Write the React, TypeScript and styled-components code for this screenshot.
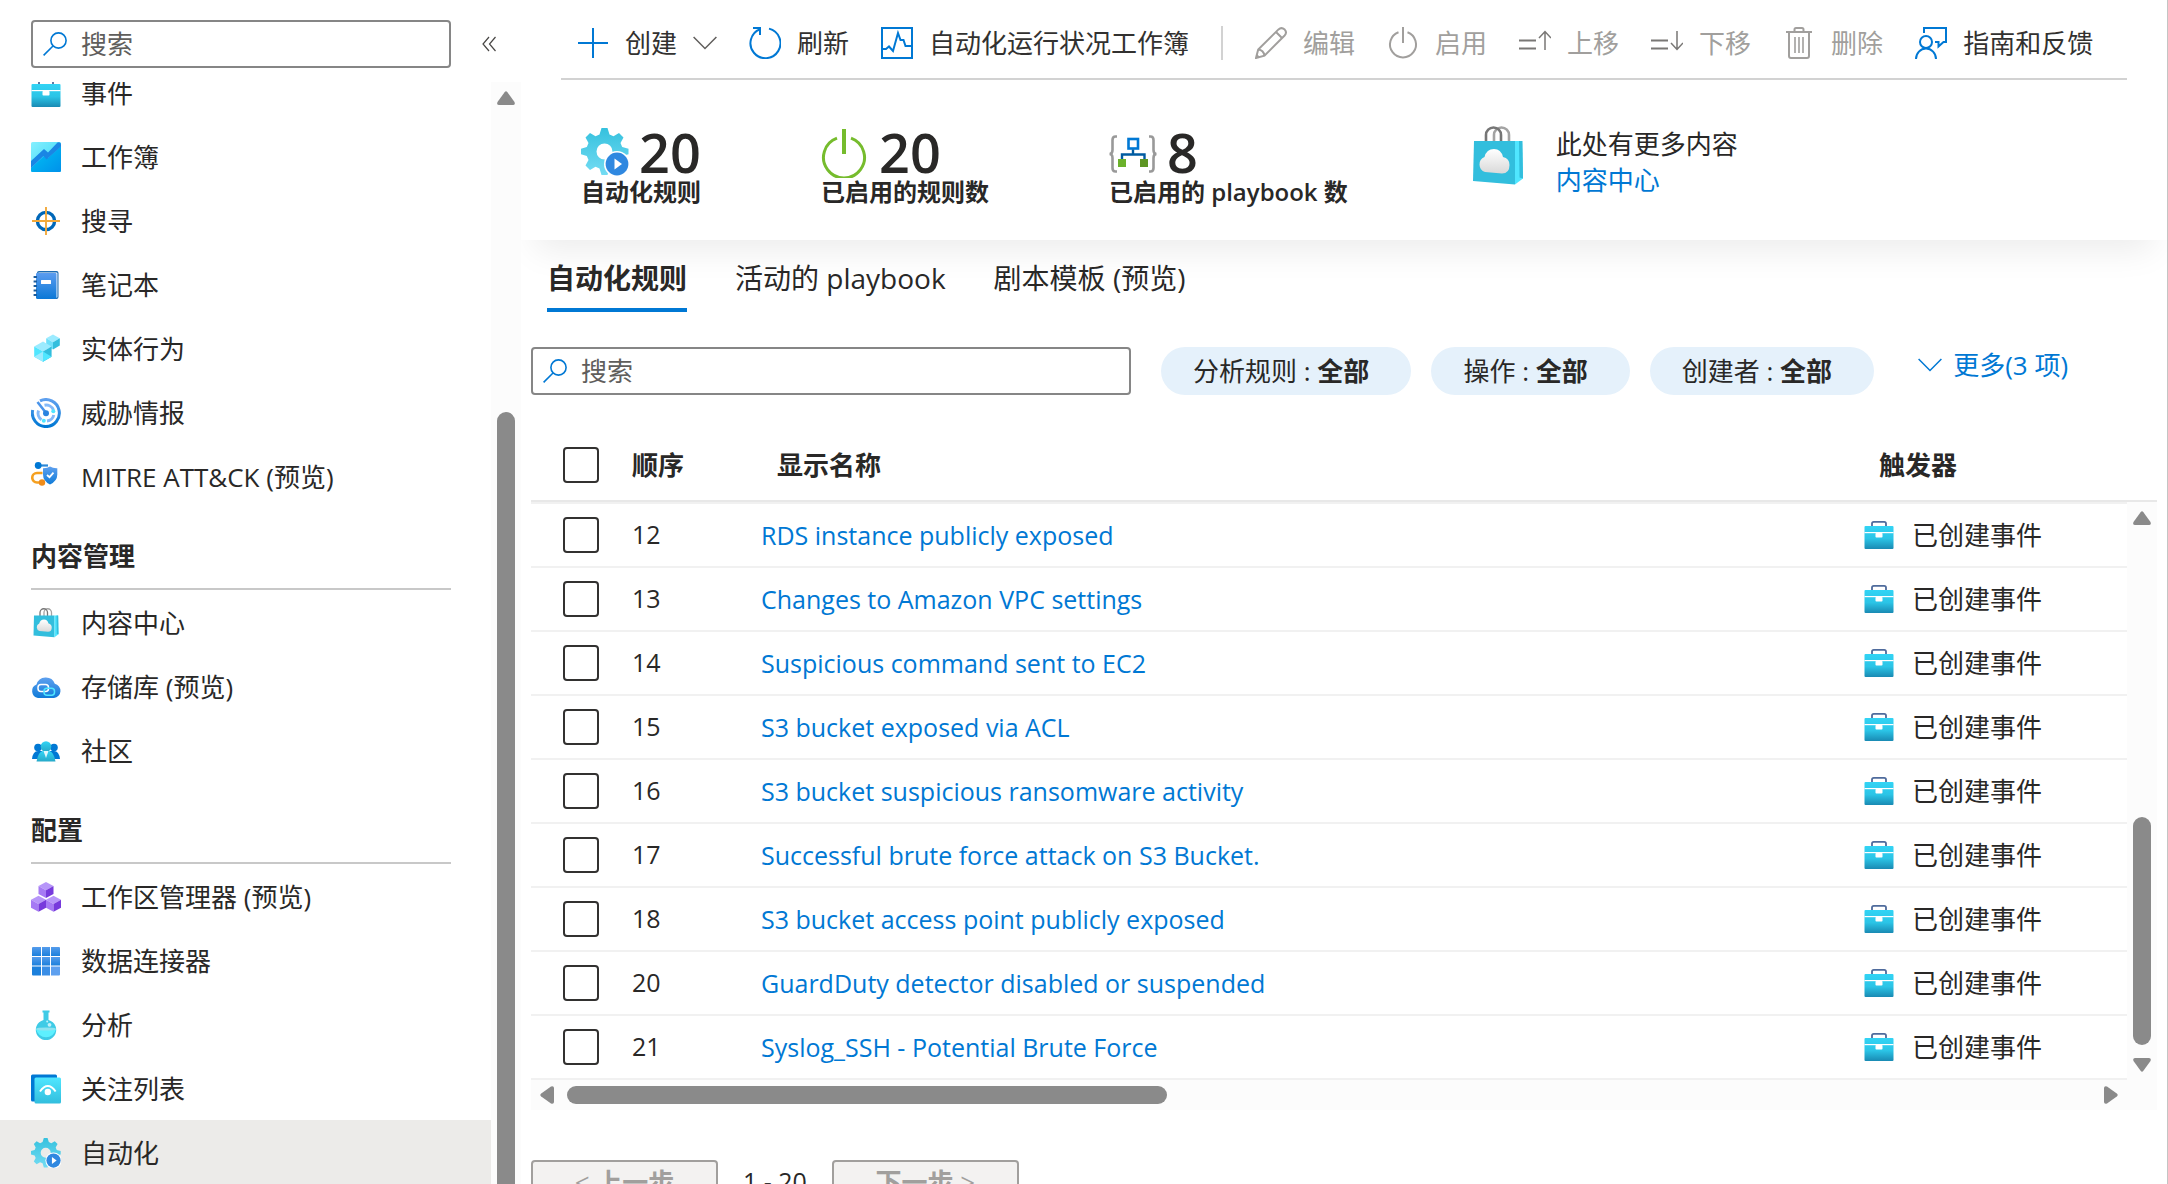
import React from "react";
import styled, { createGlobalStyle, css } from "styled-components";

const color = {
  text: "#292827",
  body: "#323130",
  muted: "#605e5c",
  disabled: "#a19f9d",
  blue: "#0078d4",
  line: "#d2d2d2",
  rowLine: "#f1f1f1",
  headLine: "#e8e8e8",
  inputBorder: "#868686",
  track: "#fcfcfc",
  thumb: "#8a8a8a",
  pill: "#e5f1fb",
  selected: "#ecebe9",
};

const Global = createGlobalStyle`
  *, *::before, *::after { box-sizing: border-box; }
  body { margin: 0; background: #fff; }
  body, button, input {
    font-family: "Open Sans", "Noto Sans CJK SC", sans-serif;
    font-size: 26px;
    line-height: 36px;
    color: ${color.text};
  }
  a { color: ${color.blue}; text-decoration: none; }
  svg { display: block; flex: none; }
`;

/* ---------- Icons ---------- */

const SearchIcon = () => (
  <svg width="24" height="24" viewBox="0 0 24 24" fill="none" stroke={color.blue} strokeWidth="1.6">
    <circle cx="15.5" cy="8.5" r="7.6" />
    <path d="M10 14 L0.6 23.4" />
  </svg>
);

const BriefcaseIcon = () => (
  <svg width="30" height="30" viewBox="0 0 30 30">
    <defs>
      <linearGradient id="caseFill" x1="0" y1="0" x2="0" y2="1">
        <stop offset="0" stopColor="#32d4f5" />
        <stop offset="0.55" stopColor="#2bc4e6" />
        <stop offset="1" stopColor="#198ab3" />
      </linearGradient>
    </defs>
    <path d="M8 7V3.6Q8 1.8 9.8 1.8H20.2Q22 1.8 22 3.6V7" fill="none" stroke="#4f6b9c" strokeWidth="1.8" />
    <rect x="0.5" y="6" width="29" height="23" rx="1" fill="url(#caseFill)" />
    <rect x="0.5" y="12" width="29" height="1.2" fill="#fff" />
    <rect x="11.5" y="13" width="7" height="4.5" rx="0.8" fill="#fff" />
  </svg>
);

const WorkbookIcon = () => (
  <svg width="30" height="30" viewBox="0 0 30 30">
    <defs>
      <linearGradient id="wbTop" x1="0" y1="0" x2="1" y2="1">
        <stop offset="0" stopColor="#86f0ff" />
        <stop offset="1" stopColor="#32d4f5" />
      </linearGradient>
      <linearGradient id="wbBottom" x1="0" y1="0" x2="1" y2="1">
        <stop offset="0" stopColor="#00c4f5" />
        <stop offset="1" stopColor="#0091ea" />
      </linearGradient>
    </defs>
    <rect width="30" height="30" rx="1.6" fill="url(#wbTop)" />
    <path d="M0 26L14 13L17 16L30 4V28.4Q30 30 28.4 30H1.6Q0 30 0 28.4Z" fill="url(#wbBottom)" />
    <path d="M0 19L13 7L17 10.5L26.5 0.5Q30 -0.5 30 3V4.5L15.5 17.5L12.5 14L0 26Z" fill="#1a86e4" />
  </svg>
);

const HuntingIcon = () => (
  <svg width="30" height="30" viewBox="0 0 30 30" fill="none">
    <circle cx="15" cy="15" r="8.6" stroke="#0067b8" strokeWidth="3.4" />
    <path d="M15 1V29M1 15H29" stroke="#f2a93b" strokeWidth="1.9" />
  </svg>
);

const NotebookIcon = () => (
  <svg width="30" height="30" viewBox="0 0 30 30">
    <defs>
      <linearGradient id="nbFill" x1="0" y1="0" x2="0" y2="1">
        <stop offset="0" stopColor="#5a9cf0" />
        <stop offset="1" stopColor="#0b78d6" />
      </linearGradient>
    </defs>
    <rect x="6" y="1" width="21.5" height="28" rx="2" fill="#1b6cb3" />
    <rect x="7" y="2.4" width="19.4" height="25.4" rx="1" fill="#fff" />
    <path d="M5 4Q5 3 6 3H24.5Q25.5 3 25.5 4V27.5Q25.5 29 24 29H6.5Q5 29 5 27.5Z" fill="url(#nbFill)" />
    <rect x="10" y="10" width="10" height="4" rx="0.5" fill="#fff" />
    <path d="M2.6 7H6M2.6 11.5H6M2.6 16H6M2.6 20.5H6M2.6 25H6" stroke="#1b5c9c" strokeWidth="2" />
  </svg>
);

const EntityIcon = () => (
  <svg width="30" height="30" viewBox="0 0 30 30">
    <path d="M22 0.5L28.8 4.2L22 8.2L15.2 4.2Z" fill="#9cebff" />
    <path d="M15.2 4.2L22 8.2V15.5L15.2 11.6Z" fill="#6fe0fa" />
    <path d="M28.8 4.2L22 8.2V15.5L28.8 11.6Z" fill="#32bedd" />
    <path d="M12 7.5L20.6 12.4L12 17.4L3.2 12.4Z" fill="#9cebff" />
    <path d="M3.2 12.4L12 17.4V27.8L3.2 22.7Z" fill="#50e6ff" />
    <path d="M3.2 22.7L12 17.4V27.8Z" fill="#9cebff" />
    <path d="M20.6 12.4L12 17.4V27.8L20.6 22.7Z" fill="#32bedd" />
    <path d="M20.6 22.7L12 17.4V27.8Z" fill="#50e6ff" />
  </svg>
);

const ThreatIcon = () => (
  <svg width="30" height="30" viewBox="0 0 30 30" fill="none">
    <defs>
      <linearGradient id="tiRing" x1="0" y1="0" x2="0" y2="1">
        <stop offset="0" stopColor="#5ea0ef" />
        <stop offset="1" stopColor="#0078d4" />
      </linearGradient>
    </defs>
    <path d="M9 2.9A13.5 13.5 0 1 1 1.7 12" stroke="url(#tiRing)" strokeWidth="3" />
    <path d="M13.5 7.2A8 8 0 0 1 22.5 12M22.8 17A8 8 0 0 1 16 23M10.5 21.8A8 8 0 0 1 7.5 12.5" stroke="#83b9f9" strokeWidth="3" />
    <path d="M15.5 15.5L6.5 4" stroke="#4a94ea" strokeWidth="2.6" />
    <circle cx="15" cy="15.2" r="3" fill="#2a84e0" />
    <circle cx="22.3" cy="13.2" r="2" fill="#50e6ff" />
    <circle cx="12.8" cy="22.8" r="2" fill="#50e6ff" />
  </svg>
);

const MitreIcon = () => (
  <svg width="30" height="30" viewBox="0 0 30 30" fill="none">
    <defs>
      <linearGradient id="shieldFill" x1="0" y1="0" x2="0" y2="1">
        <stop offset="0" stopColor="#5ea0ef" />
        <stop offset="1" stopColor="#0f7bd8" />
      </linearGradient>
    </defs>
    <path d="M7 3.500H17" stroke="#2b88d8" strokeWidth="2.2" />
    <circle cx="7.2" cy="3.500" r="3.400" fill="#0078d4" />
    <path d="M11.500 11H6A4.600 4.600 0 0 0 6 20.500H11" stroke="#f5a020" strokeWidth="2.6" />
    <circle cx="11" cy="20.500" r="3.200" fill="#f08c1a" />
    <path d="M19 4.500Q22 6.500 26.300 6.300V12.500Q26.300 19 19 22.500Q12 19 12 12.500V6.300Q16 6.500 19 4.500Z" fill="url(#shieldFill)" />
    <path d="M16 13L18.500 15.200L22.500 10.700" stroke="#fff" strokeWidth="1.800" />
  </svg>
);

const BagIcon = ({ size = 30 }: { size?: number }) => (
  <svg width={size} height={size} viewBox="0 0 60 60">
    <defs>
      <linearGradient id="bagCloud" x1="0" y1="0" x2="0" y2="1">
        <stop offset="0" stopColor="#ffffff" />
        <stop offset="1" stopColor="#d9d9d9" />
      </linearGradient>
    </defs>
    <path d="M26 17V9A7.5 7.5 0 0 1 41 9V17" fill="none" stroke="#a3a3a3" strokeWidth="2.6" />
    <path d="M18 17V9A7.5 7.5 0 0 1 33 9V17" fill="none" stroke="#767676" strokeWidth="2.6" />
    <path d="M6 15H47V58.5L5 55Z" fill="#32bedd" />
    <path d="M47 15H54L55 52.5L47 58.5Z" fill="#50e6ff" />
    <path d="M51 15H54.5L55 52.5L51.5 51.5Z" fill="#32bedd" />
    <path d="M17 46A8 8 0 0 1 16.5 31Q18.500 23 26 23Q33 23 35 31Q41.500 32.500 41.500 39Q41.500 47.500 34 47.500Z" fill="url(#bagCloud)" />
  </svg>
);

const RepoIcon = () => (
  <svg width="30" height="30" viewBox="0 0 30 30" fill="none">
    <defs>
      <linearGradient id="repoFill" x1="0" y1="0" x2="0" y2="1">
        <stop offset="0" stopColor="#5ea0ef" />
        <stop offset="1" stopColor="#0f7bd8" />
      </linearGradient>
    </defs>
    <path d="M7 26A7 7 0 0 1 5.500 12.600A9.600 9.600 0 0 1 23.800 11.800A7.200 7.200 0 0 1 23 26Z" fill="url(#repoFill)" />
    <rect x="7" y="12.500" width="10.500" height="7" rx="3" stroke="#fff" strokeWidth="1.500" />
    <rect x="13" y="16.300" width="10.500" height="7" rx="3" stroke="#50e6ff" strokeWidth="1.500" />
  </svg>
);

const CommunityIcon = () => (
  <svg width="30" height="30" viewBox="0 0 30 30">
    <defs>
      <linearGradient id="personFill" x1="0" y1="0" x2="0" y2="1">
        <stop offset="0" stopColor="#32d4f5" />
        <stop offset="1" stopColor="#26a9c9" />
      </linearGradient>
    </defs>
    <circle cx="7" cy="11.500" r="3.800" fill="#0078d4" />
    <circle cx="23" cy="11.500" r="3.800" fill="#0078d4" />
    <path d="M1 23Q2 15 7 15H11V23Z M29 23Q28 15 23 15H19V23Z" fill="#0078d4" />
    <circle cx="15" cy="10.500" r="5.300" fill="url(#personFill)" />
    <path d="M5.500 25.500Q7.500 15 12 15H18Q22.500 15 24.500 25.500Z" fill="url(#personFill)" />
    <path d="M12.500 15H17.500L15 22Z" fill="#e3f7fc" />
  </svg>
);

const cube = (x: number, y: number) => (
  <g transform={`translate(${x} ${y})`}>
    <path d="M7.500 0L15 4L7.500 8.300L0 4Z" fill="#b796f9" />
    <path d="M0 4L7.500 8.300V16L0 12Z" fill="#a67af4" />
    <path d="M15 4L7.500 8.300V16L15 12Z" fill="#773adc" />
  </g>
);

const CubesIcon = () => (
  <svg width="30" height="30" viewBox="0 0 30 30">
    {cube(7.5, 0)}
    {cube(0, 13.8)}
    {cube(15, 13.8)}
  </svg>
);

const GridIcon = () => (
  <svg width="30" height="30" viewBox="0 0 30 30">
    <defs>
      <linearGradient id="cellFill" x1="0" y1="0" x2="0" y2="1">
        <stop offset="0" stopColor="#559cec" />
        <stop offset="1" stopColor="#1c80dc" />
      </linearGradient>
    </defs>
    <path d="M1 2Q1 1 2 1H10V10H1Z M11 1H19V10H11Z M20 1H28Q29 1 29 2V10H20Z" fill="url(#cellFill)" />
    <path d="M1 11H10V19.500H1Z M11 11H19V19.500H11Z M20 11H29V19.500H20Z" fill="url(#cellFill)" />
    <path d="M1 20.500H10V29.500H2Q1 29.500 1 28.500Z" fill="#1c80dc" />
    <path d="M11 20.500H19V29.500H11Z" fill="#3a8ee6" />
    <path d="M20 20.500H29V28.500Q29 29.500 28 29.500H20Z" fill="#5ea0ef" />
  </svg>
);

const FlaskIcon = () => (
  <svg width="30" height="30" viewBox="0 0 30 30">
    <path d="M11.500 0.500H18.500V2.500H17.500V10A10.200 10.200 0 1 1 12.500 10V2.500H11.500Z" fill="#3fcbe6" />
    <path d="M5 19H25A10.200 10.200 0 0 1 5 19Z" fill="#5df0ff" />
    <ellipse cx="15" cy="19" rx="10" ry="1.600" fill="#8fe3f0" />
    <circle cx="18.500" cy="14.800" r="1.900" fill="#c3f1fb" />
    <circle cx="16.200" cy="11.600" r="1" fill="#c3f1fb" />
  </svg>
);

const WatchlistIcon = () => (
  <svg width="30" height="30" viewBox="0 0 30 30" fill="none">
    <defs>
      <linearGradient id="watchFill" x1="0" y1="0" x2="0" y2="1">
        <stop offset="0" stopColor="#50e6ff" />
        <stop offset="1" stopColor="#32bedd" />
      </linearGradient>
    </defs>
    <rect x="0" y="0.500" width="26" height="27" rx="1.500" fill="#0078d4" />
    <rect x="3.500" y="3.500" width="26.500" height="26" rx="1.500" fill="url(#watchFill)" />
    <path d="M9 17.500Q16.800 6.500 24.600 17.500" stroke="#fff" strokeWidth="2" />
    <circle cx="16.800" cy="18" r="3.200" fill="#fff" />
  </svg>
);

const AutomationIcon = ({ size = 30 }: { size?: number }) => (
  <svg width={size} height={size} viewBox="0 0 48 48">
    <defs>
      <linearGradient id="gearFill" x1="0" y1="0" x2="0" y2="1">
        <stop offset="0" stopColor="#35c1de" />
        <stop offset="1" stopColor="#74dcf3" />
      </linearGradient>
    </defs>
    <path
      fillRule="evenodd"
      fill="url(#gearFill)"
      d="M20.500 0H26.500L28.500 6.500L32.500 8.200L38 5L42.500 9.500L39.500 15L41.200 19L47.500 20.700V26.300L41.200 28L39.500 32L42.500 37.500L38 42L32.500 38.800L28.500 40.500L26.500 47H20.500L18.500 40.500L14.500 38.800L9 42L4.500 37.500L7.500 32L5.800 28L0 26.300V20.700L5.800 19L7.500 15L4.500 9.500L9 5L14.500 8.200L18.500 6.500ZM23.500 15.500A8 8 0 1 0 23.500 31.500A8 8 0 1 0 23.500 15.500Z"
    />
    <circle cx="36" cy="36" r="13" fill="#fff" />
    <circle cx="36" cy="36" r="11.400" fill="#2f88e0" />
    <path d="M33.500 30.500L41 36L33.500 41.500Z" fill="#fff" />
  </svg>
);

const PlusIcon = () => (
  <svg width="32" height="32" viewBox="0 0 32 32" stroke={color.blue} strokeWidth="2">
    <path d="M16 1V31M1 16H31" />
  </svg>
);

const ChevronIcon = ({ stroke }: { stroke: string }) => (
  <svg width="24" height="14" viewBox="0 0 24 14" fill="none" stroke={stroke} strokeWidth="1.500">
    <path d="M0.600 1L12 12.500L23.400 1" />
  </svg>
);

const RefreshIcon = () => (
  <svg width="32" height="32" viewBox="0 0 32 32" fill="none" stroke={color.blue} strokeWidth="2">
    <path d="M20 1.600A15 15 0 1 1 11 2.200" />
    <path d="M4 1H11V8" />
  </svg>
);

const HealthIcon = () => (
  <svg width="32" height="32" viewBox="0 0 32 32" fill="none" stroke={color.blue} strokeWidth="2">
    <rect x="1" y="1" width="30" height="30" />
    <path d="M1 22H5L8 19.500L12 24L17 6L19.500 13H22.500L24.500 19H31" />
  </svg>
);

const PencilIcon = () => (
  <svg width="32" height="32" viewBox="0 0 32 32" fill="none" stroke={color.disabled} strokeWidth="2">
    <path d="M1 31L3.200 22.500L23.500 2.400Q26.500 -0.200 29.700 2.600Q32.300 5.500 29.600 8.500L9.500 28.700Z" />
    <path d="M3.200 22.500Q8.500 23 9.500 28.700M21 5L27 11M1.500 28L4 30.500" />
  </svg>
);

const PowerIcon = () => (
  <svg width="32" height="32" viewBox="0 0 32 32" fill="none" stroke={color.disabled} strokeWidth="2">
    <path d="M11.500 5.200A13 13 0 1 0 20.500 5.200M16 0V16" />
  </svg>
);

const MoveUpIcon = () => (
  <svg width="32" height="32" viewBox="0 0 32 32" fill="none" stroke="#797775">
    <path d="M0 13.500H17M0 21.500H17" strokeWidth="2" />
    <path d="M26 4.500V23M20 11L26 4.500L32 11" strokeWidth="1.500" />
  </svg>
);

const MoveDownIcon = () => (
  <svg width="32" height="32" viewBox="0 0 32 32" fill="none" stroke="#797775">
    <path d="M0 13.500H17M0 21.500H17" strokeWidth="2" />
    <path d="M26 4V22.500M20 16L26 22.500L32 16" strokeWidth="1.500" />
  </svg>
);

const TrashIcon = () => (
  <svg width="32" height="32" viewBox="0 0 32 32" fill="none" stroke={color.disabled} strokeWidth="2">
    <path d="M3 5H29M6 5V29Q6 31 8 31H24Q26 31 26 29V5M11.500 5V2.500Q11.500 1 13 1H19Q20.500 1 20.500 2.500V5" />
    <path d="M12 10V26M16 10V26M20 10V26" strokeWidth="1.600" />
  </svg>
);

const FeedbackIcon = () => (
  <svg width="32" height="32" viewBox="0 0 32 32" fill="none" stroke={color.blue} strokeWidth="2">
    <circle cx="11" cy="15" r="6" />
    <path d="M1 32A10 10.500 0 0 1 21 32" />
    <path d="M9 6V1H31V15H28.500L23.500 19.500V15H20" />
  </svg>
);

const GreenPowerIcon = () => (
  <svg width="48" height="52" viewBox="0 0 48 52" fill="none" stroke="#76bc2d">
    <path d="M16 12.200A20.500 20.500 0 1 0 30 12.200" strokeWidth="3" />
    <path d="M23 3V28" strokeWidth="4" />
  </svg>
);

const PlaybookIcon = () => (
  <svg width="48" height="42" viewBox="0 0 48 42" fill="none">
    <path d="M8 5.500H6.500Q3.500 5.500 3.500 9V19Q3.500 23 0.500 23Q3.500 23 3.500 27V37Q3.500 40.500 6.500 40.500H8" stroke="#999" strokeWidth="2.600" />
    <path d="M40 5.500H41.500Q44.500 5.500 44.500 9V19Q44.500 23 47.500 23Q44.500 23 44.500 27V37Q44.500 40.500 41.500 40.500H40" stroke="#999" strokeWidth="2.600" />
    <rect x="19.500" y="8" width="9.500" height="9.500" stroke="#0078d4" strokeWidth="2.600" />
    <path d="M24 18.500V23.500M13 28.500V23.500H35.500V28.500" stroke="#005ba1" strokeWidth="2.400" />
    <rect x="9" y="28" width="8" height="8" fill="#6bb12b" />
    <rect x="31" y="28" width="8" height="8" fill="#5e9624" />
  </svg>
);

const DoubleChevronIcon = () => (
  <svg width="14" height="16" viewBox="0 0 14 16" fill="none" stroke="#484644" strokeWidth="1.200">
    <path d="M7 1L1 8L7 15M13.500 1L7.500 8L13.500 15" />
  </svg>
);

const arrowTurn = { up: 0, right: 90, down: 180, left: 270 };

const ScrollArrow = ({ to }: { to: keyof typeof arrowTurn }) => (
  <svg width="18" height="18" viewBox="0 0 18 18" fill={color.thumb}>
    <path
      transform={`rotate(${arrowTurn[to]} 9 9)`}
      d="M7.600 3.200Q9 1.400 10.400 3.200L17.500 13Q18.500 15.800 16 16H2Q-0.500 15.800 0.500 13Z"
    />
  </svg>
);

/* ---------- Layout ---------- */

const Shell = styled.div`
  display: flex;
  height: 100vh;
  overflow: hidden;
`;

const Sidebar = styled.aside`
  flex: 0 0 521px;
  display: flex;
  flex-direction: column;
  min-height: 0;
`;

const SidebarTop = styled.div`
  display: flex;
  align-items: center;
  gap: 31px;
  padding: 20px 25px 14px 31px;
`;

const SearchBox = styled.label<{ $width: number }>`
  flex: 0 1 ${(p) => p.$width}px;
  min-width: 0;
  height: 48px;
  display: flex;
  align-items: center;
  gap: 14px;
  padding: 0 10px;
  border: 2px solid ${color.inputBorder};
  border-radius: 4px;
`;

const SearchInput = styled.input`
  flex: 1;
  min-width: 0;
  padding: 0;
  border: 0;
  outline: 0;
  background: transparent;
  &::placeholder {
    color: ${color.muted};
    opacity: 1;
  }
`;

const IconButton = styled.button`
  padding: 0;
  border: 0;
  background: none;
  cursor: pointer;
`;

const SidebarBody = styled.div`
  flex: 1;
  display: flex;
  min-height: 0;
`;

/* The menu is scrolled to its end, so overflow leaves at the top. */
const Menu = styled.nav`
  flex: 1;
  min-width: 0;
  display: flex;
  flex-direction: column;
  justify-content: flex-end;
  overflow: hidden;
`;

const MenuLink = styled.a<{ $selected?: boolean }>`
  flex: 0 0 64px;
  display: flex;
  align-items: center;
  gap: 20px;
  padding: 2px 0 0 31px;
  color: ${color.text};
  white-space: nowrap;
  background: ${(p) => (p.$selected ? color.selected : "transparent")};
`;

const MenuHeading = styled.h2`
  flex: 0 0 82px;
  margin: 0 40px 0 31px;
  padding-top: 30px;
  border-bottom: 2px solid #c8c8c8;
  font-size: 26px;
  line-height: 36px;
  font-weight: 700;
`;

const VerticalTrack = styled.div`
  flex: 0 0 30px;
  display: flex;
  flex-direction: column;
  align-items: center;
  padding-top: 7px;
  background: ${color.track};
`;

const Gap = styled.div<{ $share: number }>`
  flex: ${(p) => p.$share} 0 0;
`;

const Thumb = styled.div<{ $share: number; $open?: boolean; $horizontal?: boolean }>`
  flex: ${(p) => p.$share} 0 0;
  background: ${color.thumb};
  border-radius: ${(p) => (p.$open ? "9px 9px 0 0" : "9px")};
  ${(p) => (p.$horizontal ? css`height: 18px;` : css`width: 18px;`)}
`;

const Main = styled.main`
  flex: 1;
  min-width: 0;
  overflow: hidden;
  border-right: 1px solid #c4c4c4;
`;

const Toolbar = styled.div`
  height: 80px;
  margin: 0 40px;
  padding: 8px 0 0 16px;
  display: flex;
  align-items: center;
  gap: 32px;
  border-bottom: 2px solid ${color.line};
`;

const ToolButton = styled.button`
  display: flex;
  align-items: center;
  gap: 16px;
  padding: 0;
  border: 0;
  background: none;
  color: ${color.body};
  white-space: nowrap;
  cursor: pointer;
  &:disabled {
    color: ${color.disabled};
    cursor: default;
  }
`;

const Separator = styled.div`
  width: 2px;
  height: 34px;
  background: ${color.line};
`;

const Summary = styled.section`
  height: 160px;
  padding: 46px 60px 0;
  display: flex;
  align-items: flex-start;
  gap: 120px;
  box-shadow: 0 24px 32px -14px rgba(0, 0, 0, 0.08);
`;

const StatTop = styled.div`
  height: 52px;
  display: flex;
  align-items: center;
  gap: 10px;
`;

const StatValue = styled.strong`
  font-size: 54px;
  line-height: 50px;
  font-weight: 600;
`;

const StatLabel = styled.div`
  font-size: 24px;
  line-height: 28px;
  font-weight: 600;
  white-space: nowrap;
`;

const Promo = styled.div`
  display: flex;
  gap: 28px;
`;

const PromoText = styled.div`
  display: flex;
  flex-direction: column;
  white-space: nowrap;
`;

const Tabs = styled.div`
  display: flex;
  gap: 48px;
  padding: 18px 26px 0;
`;

const Tab = styled.button<{ $active?: boolean }>`
  padding: 0 0 10px;
  border: 0;
  border-bottom: 4px solid ${(p) => (p.$active ? color.blue : "transparent")};
  background: none;
  font-size: 28px;
  line-height: 40px;
  font-weight: ${(p) => (p.$active ? 700 : 400)};
  white-space: nowrap;
  cursor: pointer;
`;

const Filters = styled.div`
  display: flex;
  gap: 30px;
  padding: 35px 10px 0;
`;

const Pills = styled.div`
  display: flex;
  gap: 20px;
`;

const Pill = styled.button`
  height: 48px;
  padding: 0 42px 0 32px;
  border: 0;
  border-radius: 24px;
  background: ${color.pill};
  white-space: nowrap;
  cursor: pointer;
`;

const MoreButton = styled.button`
  display: flex;
  align-items: center;
  align-self: flex-start;
  gap: 11px;
  margin-left: 14px;
  padding: 0;
  border: 0;
  background: none;
  color: ${color.blue};
  line-height: 36px;
  white-space: nowrap;
  cursor: pointer;
`;

const Grid = styled.div`
  display: flex;
  margin: 35px 10px 0;
`;

const Table = styled.table`
  flex: 1;
  min-width: 0;
  table-layout: fixed;
  border-collapse: separate;
  border-spacing: 0;
`;

const HeadCell = styled.th<{ $width?: number; $inset?: number }>`
  height: 72px;
  width: ${(p) => (p.$width ? `${p.$width}px` : "auto")};
  padding: 0 0 0 ${(p) => p.$inset ?? 0}px;
  border-bottom: 2px solid ${color.headLine};
  text-align: left;
  font-weight: 700;
  vertical-align: middle;
`;

const Row = styled.tr`
  &:first-child td {
    height: 66px;
    border-top: 2px solid ${color.rowLine};
  }
`;

const Cell = styled.td<{ $inset?: number }>`
  height: 64px;
  padding: 0 0 0 ${(p) => p.$inset ?? 0}px;
  border-bottom: 2px solid ${color.rowLine};
  white-space: nowrap;
  vertical-align: middle;
`;

const OrderCell = styled(Cell)`
  padding-bottom: 2px;
  font-size: 25px;
`;

const RuleLink = styled.a`
  font-size: 25px;
`;

const Checkbox = styled.input`
  appearance: none;
  display: block;
  width: 36px;
  height: 36px;
  margin: 0;
  border: 2px solid ${color.body};
  border-radius: 4px;
  background: #fff;
`;

const Trigger = styled.div`
  display: flex;
  align-items: center;
  gap: 18px;
`;

const GridScroll = styled.div`
  flex: 0 0 30px;
  display: flex;
  flex-direction: column;
`;

const GridScrollHead = styled.div`
  height: 72px;
  border-bottom: 2px solid ${color.headLine};
`;

const GridTrack = styled(VerticalTrack)`
  flex: 1;
  padding-bottom: 6px;
`;

const HorizontalTrack = styled.div`
  height: 30px;
  margin: 0 10px;
  padding: 0 37px 0 7px;
  display: flex;
  align-items: center;
  gap: 11px;
  background: ${color.track};
`;

const Pager = styled.div`
  display: flex;
  align-items: center;
  gap: 25px;
  padding: 50px 10px 0;
`;

const PagerButton = styled.button`
  width: 187px;
  height: 48px;
  padding: 0 0 4px;
  border: 2px solid ${color.disabled};
  border-radius: 4px;
  background: #f3f2f1;
  font-weight: 700;
  color: ${color.disabled};
`;

const PagerArrow = styled.span`
  font-weight: 400;
`;

const PagerRange = styled.span`
  padding-bottom: 6px;
  font-size: 25px;
  white-space: nowrap;
`;

/* ---------- Data ---------- */

const mainLinks = [
  { label: "事件", icon: <BriefcaseIcon /> },
  { label: "工作簿", icon: <WorkbookIcon /> },
  { label: "搜寻", icon: <HuntingIcon /> },
  { label: "笔记本", icon: <NotebookIcon /> },
  { label: "实体行为", icon: <EntityIcon /> },
  { label: "威胁情报", icon: <ThreatIcon /> },
  { label: "MITRE ATT&CK (预览)", icon: <MitreIcon /> },
];

const contentLinks = [
  { label: "内容中心", icon: <BagIcon /> },
  { label: "存储库 (预览)", icon: <RepoIcon /> },
  { label: "社区", icon: <CommunityIcon /> },
];

const configLinks = [
  { label: "工作区管理器 (预览)", icon: <CubesIcon /> },
  { label: "数据连接器", icon: <GridIcon /> },
  { label: "分析", icon: <FlaskIcon /> },
  { label: "关注列表", icon: <WatchlistIcon /> },
  { label: "自动化", icon: <AutomationIcon />, selected: true },
];

const disabledTools = [
  { label: "编辑", icon: <PencilIcon /> },
  { label: "启用", icon: <PowerIcon /> },
  { label: "上移", icon: <MoveUpIcon /> },
  { label: "下移", icon: <MoveDownIcon /> },
  { label: "删除", icon: <TrashIcon /> },
];

const stats = [
  { value: 20, label: "自动化规则", icon: <AutomationIcon size={48} /> },
  { value: 20, label: "已启用的规则数", icon: <GreenPowerIcon /> },
  { value: 8, label: "已启用的 playbook 数", icon: <PlaybookIcon /> },
];

const tabs = ["自动化规则", "活动的 playbook", "剧本模板 (预览)"];

const filters = ["分析规则", "操作", "创建者"];

const rules = [
  { order: 12, name: "RDS instance publicly exposed" },
  { order: 13, name: "Changes to Amazon VPC settings" },
  { order: 14, name: "Suspicious command sent to EC2" },
  { order: 15, name: "S3 bucket exposed via ACL" },
  { order: 16, name: "S3 bucket suspicious ransomware activity" },
  { order: 17, name: "Successful brute force attack on S3 Bucket." },
  { order: 18, name: "S3 bucket access point publicly exposed" },
  { order: 20, name: "GuardDuty detector disabled or suspended" },
  { order: 21, name: "Syslog_SSH - Potential Brute Force" },
];

type LinkItem = { label: string; icon: React.ReactNode; selected?: boolean };

const MenuLinks = ({ items }: { items: LinkItem[] }) => (
  <>
    {items.map((item) => (
      <MenuLink key={item.label} href="#" $selected={item.selected}>
        {item.icon}
        {item.label}
      </MenuLink>
    ))}
  </>
);

export default function App() {
  return (
    <>
      <Global />
      <Shell>
        <Sidebar>
          <SidebarTop>
            <SearchBox $width={420}>
              <SearchIcon />
              <SearchInput type="text" placeholder="搜索" aria-label="搜索" />
            </SearchBox>
            <IconButton type="button" aria-label="折叠">
              <DoubleChevronIcon />
            </IconButton>
          </SidebarTop>
          <SidebarBody>
            <Menu>
              <MenuLinks items={mainLinks} />
              <MenuHeading>内容管理</MenuHeading>
              <MenuLinks items={contentLinks} />
              <MenuHeading>配置</MenuHeading>
              <MenuLinks items={configLinks} />
            </Menu>
            <VerticalTrack aria-hidden="true">
              <ScrollArrow to="up" />
              <Gap $share={305} />
              <Thumb $share={772} $open />
            </VerticalTrack>
          </SidebarBody>
        </Sidebar>

        <Main>
          <Toolbar>
            <ToolButton type="button">
              <PlusIcon />
              创建
              <ChevronIcon stroke="#605e5c" />
            </ToolButton>
            <ToolButton type="button">
              <RefreshIcon />
              刷新
            </ToolButton>
            <ToolButton type="button">
              <HealthIcon />
              自动化运行状况工作簿
            </ToolButton>
            <Separator />
            {disabledTools.map((tool) => (
              <ToolButton key={tool.label} type="button" disabled>
                {tool.icon}
                {tool.label}
              </ToolButton>
            ))}
            <ToolButton type="button">
              <FeedbackIcon />
              指南和反馈
            </ToolButton>
          </Toolbar>

          <Summary>
            {stats.map((stat) => (
              <div key={stat.label}>
                <StatTop>
                  {stat.icon}
                  <StatValue>{stat.value}</StatValue>
                </StatTop>
                <StatLabel>{stat.label}</StatLabel>
              </div>
            ))}
            <Promo>
              <BagIcon size={60} />
              <PromoText>
                <span>此处有更多内容</span>
                <a href="#">内容中心</a>
              </PromoText>
            </Promo>
          </Summary>

          <Tabs role="tablist">
            {tabs.map((tab, index) => (
              <Tab key={tab} type="button" role="tab" aria-selected={index === 0} $active={index === 0}>
                {tab}
              </Tab>
            ))}
          </Tabs>

          <Filters>
            <SearchBox $width={600}>
              <SearchIcon />
              <SearchInput type="text" placeholder="搜索" aria-label="搜索规则" />
            </SearchBox>
            <Pills>
              {filters.map((filter) => (
                <Pill key={filter} type="button">
                  {filter} : <b>全部</b>
                </Pill>
              ))}
            </Pills>
            <MoreButton type="button">
              <ChevronIcon stroke={color.blue} />
              更多(3 项)
            </MoreButton>
          </Filters>

          <Grid>
            <Table>
              <thead>
                <tr>
                  <HeadCell $width={101} $inset={32}>
                    <Checkbox type="checkbox" aria-label="全选" />
                  </HeadCell>
                  <HeadCell $width={129}>顺序</HeadCell>
                  <HeadCell $inset={16}>显示名称</HeadCell>
                  <HeadCell $width={263} $inset={15}>
                    触发器
                  </HeadCell>
                </tr>
              </thead>
              <tbody>
                {rules.map((rule) => (
                  <Row key={rule.order}>
                    <Cell $inset={32}>
                      <Checkbox type="checkbox" aria-label={rule.name} />
                    </Cell>
                    <OrderCell>{rule.order}</OrderCell>
                    <Cell>
                      <RuleLink href="#">{rule.name}</RuleLink>
                    </Cell>
                    <Cell>
                      <Trigger>
                        <BriefcaseIcon />
                        已创建事件
                      </Trigger>
                    </Cell>
                  </Row>
                ))}
              </tbody>
            </Table>
            <GridScroll aria-hidden="true">
              <GridScrollHead />
              <GridTrack>
                <ScrollArrow to="up" />
                <Gap $share={289} />
                <Thumb $share={228} />
                <Gap $share={11} />
                <ScrollArrow to="down" />
              </GridTrack>
            </GridScroll>
          </Grid>
          <HorizontalTrack aria-hidden="true">
            <ScrollArrow to="left" />
            <Thumb $share={600} $horizontal />
            <Gap $share={914} />
            <ScrollArrow to="right" />
          </HorizontalTrack>

          <Pager>
            <PagerButton type="button" disabled>
              <PagerArrow>&lt;</PagerArrow> 上一步
            </PagerButton>
            <PagerRange>1 - 20</PagerRange>
            <PagerButton type="button" disabled>
              下一步 <PagerArrow>&gt;</PagerArrow>
            </PagerButton>
          </Pager>
        </Main>
      </Shell>
    </>
  );
}
